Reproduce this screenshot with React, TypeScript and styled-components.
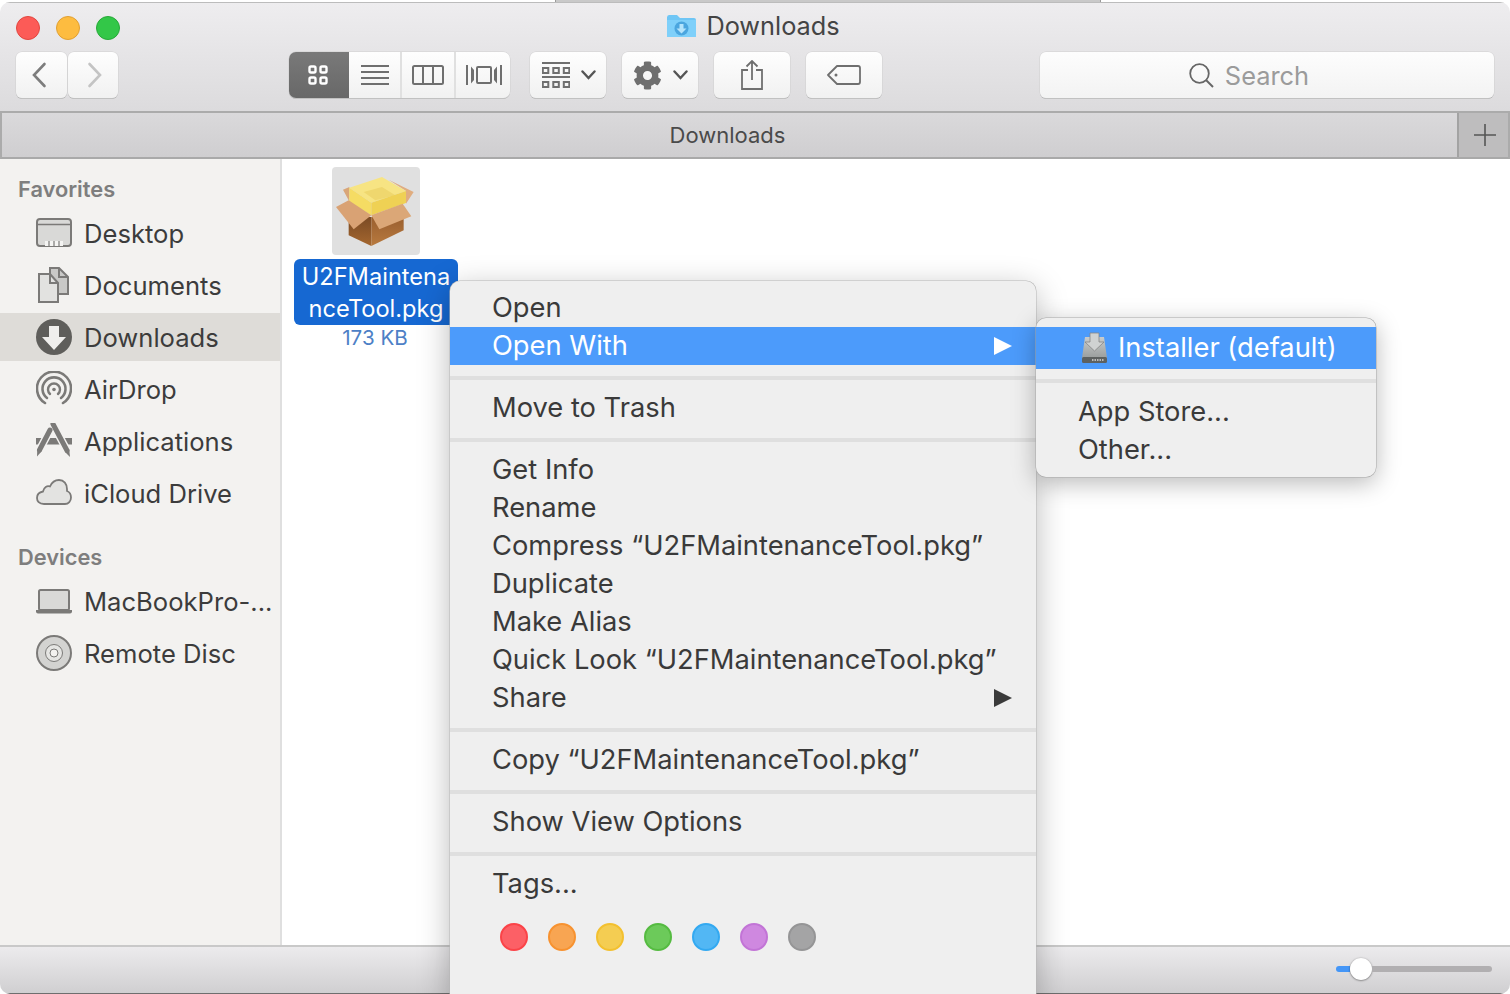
import React from 'react';
import styled, { createGlobalStyle } from 'styled-components';
import { FaCog } from 'react-icons/fa';

const GlobalStyle = createGlobalStyle`
  html, body {
    margin: 0;
    padding: 0;
    background: #fff;
    overflow: hidden;
  }
  * {
    box-sizing: border-box;
  }
`;

const Page = styled.div`
  position: relative;
  width: 1510px;
  height: 994px;
  overflow: hidden;
  display: flex;
  flex-direction: column;
  font-family: Inter, "Liberation Sans", sans-serif;
  color: #3a3a3a;
`;

const BackWindowEdge = styled.div`
  height: 2px;
  flex: none;
  margin: 0 409px 0 555px;
  background: #c9c9c9;
  border-left: 1px solid #9a9a9a;
  border-right: 1px solid #9a9a9a;
`;

const Window = styled.div`
  flex: 1;
  min-height: 0;
  display: flex;
  flex-direction: column;
  border-radius: 10px;
  overflow: hidden;
`;

const TitleBar = styled.div`
  height: 111px;
  flex: none;
  background: linear-gradient(#eeedef, #dcdbdd);
  border-top: 1px solid #bcbcbc;
  border-bottom: 2px solid #ababab;
`;

const TitleRow = styled.div`
  height: 49px;
  display: grid;
  grid-template-columns: 1fr auto 1fr;
  align-items: center;
`;

const Lights = styled.div`
  display: flex;
  gap: 16px;
  padding-left: 16px;
  margin-top: 1px;
`;

const Light = styled.span<{ $fill: string; $edge: string }>`
  width: 24px;
  height: 24px;
  border-radius: 50%;
  background: ${p => p.$fill};
  border: 1px solid ${p => p.$edge};
`;

const WindowTitle = styled.div`
  display: flex;
  align-items: center;
  gap: 9px;
  font-size: 25.3px;
  line-height: 32px;
  color: #444;
  padding-right: 4px;
  margin-top: -3px;
`;

const Toolbar = styled.div`
  display: flex;
  align-items: flex-start;
  padding: 0 16px;
  height: 46px;
`;

const ToolGroup = styled.div<{ $left?: number; $gap?: number }>`
  display: flex;
  gap: ${p => p.$gap ?? 0}px;
  margin-left: ${p => p.$left ?? 0}px;
`;

const ToolButton = styled.div<{ $width: number; $shift?: number }>`
  width: ${p => p.$width}px;
  height: 46px;
  display: flex;
  align-items: center;
  justify-content: center;
  gap: 11px;
  padding-left: ${p => Math.max(p.$shift ?? 0, 0)}px;
  padding-right: ${p => Math.max(-(p.$shift ?? 0), 0)}px;
  background: linear-gradient(#fefefe, #f1f1f1);
  border-radius: 6px;
  box-shadow: 0 0 0 0.5px #cfcfcf, 0 1px 0 #b2b2b2;
  color: #6f6f6f;
`;

const SegmentGroup = styled.div`
  display: flex;
  margin-left: 171px;
  border-radius: 7px;
  overflow: hidden;
  box-shadow: 0 0 0 0.5px #cfcfcf, 0 1px 0 #b2b2b2;
`;

const Segment = styled.div<{ $width: number; $active?: boolean }>`
  width: ${p => p.$width}px;
  height: 46px;
  display: flex;
  align-items: center;
  justify-content: center;
  background: ${p => (p.$active ? 'linear-gradient(#797979, #686868)' : 'linear-gradient(#fefefe, #f1f1f1)')};
  border-right: ${p => (p.$active ? 'none' : '2px solid #e0e0e0')};
  color: ${p => (p.$active ? '#fff' : '#6f6f6f')};
  padding-right: ${p => (p.$active ? 2 : 0)}px;
  &:last-child {
    border-right: none;
    padding-left: 2px;
  }
`;

const SearchField = styled.div`
  margin-left: auto;
  width: 454px;
  height: 46px;
  display: flex;
  align-items: center;
  justify-content: center;
  gap: 11px;
  padding-right: 36px;
  background: linear-gradient(#fdfdfd, #f3f3f3);
  border-radius: 6px;
  box-shadow: 0 0 0 0.5px #cfcfcf, 0 1px 0 #b2b2b2;
  font-size: 25.4px;
  color: #9b9b9b;
`;

const TabBar = styled.div`
  height: 46px;
  flex: none;
  display: flex;
  background: linear-gradient(#dad9db, #cfced0);
  border-left: 2px solid #ababab;
  border-right: 2px solid #ababab;
  border-bottom: 2px solid #a9a9a9;
`;

const TabTitle = styled.div`
  flex: 1;
  display: flex;
  align-items: center;
  justify-content: center;
  padding-right: 4px;
  font-size: 22px;
  color: #4a4a4a;
`;

const NewTab = styled.div`
  width: 51px;
  display: flex;
  align-items: center;
  justify-content: center;
  padding-left: 2px;
  background: #bebdbe;
  border-left: 2px solid #a3a3a3;
  color: #555;
`;

const Body = styled.div`
  flex: 1;
  min-height: 0;
  display: flex;
`;

const Sidebar = styled.aside`
  width: 282px;
  flex: none;
  background: #f3f2f0;
  border-right: 2px solid #dfdfdf;
  padding-top: 15px;
`;

const SidebarHeading = styled.div<{ $top?: number }>`
  height: 30px;
  line-height: 30px;
  margin-top: ${p => p.$top ?? 0}px;
  margin-bottom: 5px;
  padding-left: 18px;
  font-size: 21.8px;
  font-weight: 600;
  color: #7e7e7e;
`;

const SidebarRow = styled.div<{ $selected?: boolean }>`
  height: 48px;
  margin-bottom: 4px;
  display: flex;
  align-items: center;
  gap: 12px;
  padding-left: 36px;
  font-size: 25.6px;
  color: #3c3c3c;
  white-space: nowrap;
  background: ${p => (p.$selected ? '#dedcd8' : 'transparent')};
`;

const Content = styled.main`
  flex: 1;
  background: #fff;
  padding: 8px 0 0 12px;
`;

const FileItem = styled.div`
  width: 164px;
  display: flex;
  flex-direction: column;
  align-items: center;
`;

const FileTile = styled.div`
  width: 88px;
  height: 88px;
  border-radius: 4px;
  background: #e0e0e0;
`;

const FileName = styled.div`
  width: 164px;
  height: 66px;
  margin-top: 4px;
  padding: 2px 0 0;
  border-radius: 6px;
  background: #1668d2;
  color: #fff;
  font-size: 23.6px;
  line-height: 32px;
  text-align: center;
`;

const FileSize = styled.div`
  height: 26px;
  line-height: 26px;
  padding-right: 2px;
  font-size: 20.6px;
  color: #4d80c6;
`;

const Footer = styled.footer`
  height: 49px;
  flex: none;
  display: flex;
  align-items: center;
  justify-content: flex-end;
  padding: 0 18px 3px 0;
  background: linear-gradient(#ecebed, #d0cfd1);
  border-top: 2px solid #c9c9c9;
  border-bottom: 1px solid #6e6e6e;
`;

const Slider = styled.div`
  width: 156px;
  display: flex;
  align-items: center;
`;

const SliderFill = styled.span`
  width: 14px;
  height: 6px;
  border-radius: 3px 0 0 3px;
  background: #4496f7;
`;

const SliderThumb = styled.span`
  width: 22px;
  height: 22px;
  flex: none;
  border-radius: 50%;
  background: #fff;
  box-shadow: 0 0.5px 2px rgba(0, 0, 0, 0.55);
`;

const SliderRest = styled.span`
  flex: 1;
  height: 6px;
  border-radius: 0 3px 3px 0;
  background: #b1afb1;
`;

const Menu = styled.div`
  position: absolute;
  left: 450px;
  top: 281px;
  width: 586px;
  padding: 8px 0 50px;
  background: #efefef;
  border-radius: 10px 10px 0 0;
  box-shadow: 0 0 0 0.5px #b5b5b5, 0 8px 32px rgba(0, 0, 0, 0.28);
  font-size: 27.3px;
  color: #3a3a3a;
`;

const SubMenu = styled(Menu)`
  left: 1036px;
  top: 318px;
  width: 340px;
  height: 159px;
  padding: 9px 0 0;
  border-radius: 10px;
  box-shadow: 0 0 0 0.5px #a8a8a8, 0 6px 24px rgba(0, 0, 0, 0.28);
`;

const MenuRow = styled.div<{ $active?: boolean; $inset?: number }>`
  height: 38px;
  display: flex;
  align-items: center;
  justify-content: space-between;
  padding: 0 24px 1px ${p => p.$inset ?? 42}px;
  white-space: nowrap;
  background: ${p => (p.$active ? '#4c9bfb' : 'transparent')};
  color: ${p => (p.$active ? '#fff' : 'inherit')};
`;

const InstallerRow = styled(MenuRow)`
  height: 42px;
  justify-content: flex-start;
  gap: 10px;
`;

const MenuSeparator = styled.div`
  height: 4px;
  margin: 11px 0 9px;
  background: #dfdfdf;
`;

const SubSeparator = styled(MenuSeparator)`
  margin: 10px 0 10px;
`;

const Arrow = styled.span<{ $color: string }>`
  width: 0;
  height: 0;
  margin-top: 1px;
  border-left: 18px solid ${p => p.$color};
  border-top: 9.5px solid transparent;
  border-bottom: 9.5px solid transparent;
`;

const TagRow = styled.div`
  display: flex;
  gap: 20px;
  padding-left: 50px;
  margin-top: 20px;
`;

const TagDot = styled.span<{ $fill: string; $edge: string }>`
  width: 28px;
  height: 28px;
  border-radius: 50%;
  background: ${p => p.$fill};
  border: 2px solid ${p => p.$edge};
`;

const Stroke = { fill: 'none', stroke: 'currentColor', strokeWidth: 2 };

const FolderIcon = () => (
  <svg width="31" height="24" viewBox="0 0 31 24">
    <path d="M1 3.500Q1 1 3 1h8l3 3h14q2 0 2 2v16q0 1-1 1H2q-1 0-1-1z" fill="#6fc6f5" />
    <path d="M1 6h29v16q0 1-1 1H2q-1 0-1-1z" fill="#7fd0fa" />
    <circle cx="15.500" cy="14.500" r="7" fill="#4ba6df" />
    <path d="M13.500 10h4v4.500h3l-5 5-5-5h3z" fill="#b4e4fc" />
  </svg>
);

const ChevronBack = ({ color }: { color: string }) => (
  <svg width="16" height="26" viewBox="0 0 16 26">
    <path d="M13.500 2 3 13l10.500 11" fill="none" stroke={color} strokeWidth="2.600" strokeLinecap="round" />
  </svg>
);

const ChevronForward = ({ color }: { color: string }) => (
  <svg width="16" height="26" viewBox="0 0 16 26">
    <path d="M2.500 2 13 13 2.500 24" fill="none" stroke={color} strokeWidth="2.600" strokeLinecap="round" />
  </svg>
);

const IconsViewIcon = () => (
  <svg width="20" height="20" viewBox="0 0 20 20">
    {[1.5, 12.5].map(y =>
      [1.5, 12.5].map(x => (
        <rect key={`${x}-${y}`} x={x} y={y} width="6" height="6" rx="1.500" fill="none" stroke="currentColor" strokeWidth="2.400" />
      )),
    )}
  </svg>
);

const ListViewIcon = () => (
  <svg width="28" height="20" viewBox="0 0 28 20">
    {[1, 7, 13, 19].map(y => (
      <rect key={y} x="0" y={y - 1} width="28" height="2" fill="currentColor" />
    ))}
  </svg>
);

const ColumnViewIcon = () => (
  <svg width="32" height="20" viewBox="0 0 32 20">
    <rect x="1" y="1" width="30" height="18" rx="1.500" {...Stroke} />
    <path d="M11 1v18M21 1v18" {...Stroke} />
  </svg>
);

const CoverFlowIcon = () => (
  <svg width="36" height="22" viewBox="0 0 36 22">
    <rect x="11" y="3" width="14" height="16" rx="1" {...Stroke} />
    <path d="M1 1v20M35 1v20" {...Stroke} />
    <path d="M5 2.500v17l3-3.500v-10zM31 2.500v17l-3-3.500v-10z" fill="currentColor" />
  </svg>
);

const GroupIcon = () => (
  <svg width="28" height="26" viewBox="0 0 28 26">
    <path d="M0 1h28M0 15h28" {...Stroke} />
    {[0, 10.5, 21].map(x => (
      <g key={x}>
        <rect x={x + 0.8} y="6" width="5.500" height="5" {...Stroke} />
        <rect x={x + 0.8} y="20" width="5.500" height="5" {...Stroke} />
      </g>
    ))}
  </svg>
);

const SmallChevron = () => (
  <svg width="15" height="10" viewBox="0 0 15 10">
    <path d="M1.500 1.500 7.500 8l6-6.500" fill="none" stroke="#555" strokeWidth="2.400" strokeLinecap="round" />
  </svg>
);

const ShareIcon = () => (
  <svg width="22" height="30" viewBox="0 0 22 30">
    <path d="M7 10H1v19h20V10h-6" {...Stroke} strokeWidth="1.800" />
    <path d="M11 20V1.500M5.500 6.500 11 1l5.500 5.500" {...Stroke} strokeWidth="1.800" />
  </svg>
);

const TagIcon = () => (
  <svg width="34" height="20" viewBox="0 0 34 20">
    <path d="M10 1h21q2 0 2 2v14q0 2-2 2H10L1 10z" {...Stroke} strokeWidth="1.800" strokeLinejoin="round" />
    <circle cx="9" cy="10" r="1.500" fill="currentColor" />
  </svg>
);

const SearchIcon = () => (
  <svg width="25" height="25" viewBox="0 0 25 25">
    <circle cx="10.500" cy="10.500" r="9.300" fill="none" stroke="#666" strokeWidth="1.800" />
    <path d="m17 17 7 7" stroke="#666" strokeWidth="2" />
  </svg>
);

const PlusIcon = () => (
  <svg width="22" height="22" viewBox="0 0 22 22">
    <path d="M11 0v22M0 11h22" stroke="currentColor" strokeWidth="1.600" />
  </svg>
);

const SideIcon = ({ children }: { children: React.ReactNode }) => (
  <svg width="36" height="36" viewBox="0 0 36 36" style={{ flex: 'none' }}>
    {children}
  </svg>
);

const sideGrey = '#7b7a78';

const DesktopIcon = () => (
  <SideIcon>
    <rect x="1" y="4" width="34" height="27" rx="3" fill="#d9d9d7" stroke={sideGrey} strokeWidth="2" />
    <path d="M1 9.500h34" stroke={sideGrey} strokeWidth="1.600" />
    <rect x="9" y="26" width="18" height="5" fill="#f4f4f2" />
    <path d="M13 26v5M18 26v5M23 26v5" stroke={sideGrey} strokeWidth="1.200" />
  </SideIcon>
);

const DocumentsIcon = () => (
  <SideIcon>
    <path d="M14 1h9l9 9v17H14z" fill="#c9c9c7" stroke={sideGrey} strokeWidth="2" />
    <path d="M23 1v9h9" fill="none" stroke={sideGrey} strokeWidth="2" />
    <path d="M3 7h11l8 9v19H3z" fill="#e2e2e0" stroke={sideGrey} strokeWidth="2" />
    <path d="M14 7v9h8" fill="none" stroke={sideGrey} strokeWidth="2" />
  </SideIcon>
);

const DownloadsIcon = () => (
  <SideIcon>
    <circle cx="18" cy="18" r="18" fill="#5f5e5b" />
    <path d="M13 7h10v11h7L18 31 6 18h7z" fill="#efeeec" />
  </SideIcon>
);

const AirDropIcon = () => (
  <SideIcon>
    <g fill="none" stroke={sideGrey} strokeLinecap="round">
      <path d="M9 32A17 17 0 1 1 27 32" strokeWidth="2.600" />
      <path d="M11 27A11.500 11.500 0 1 1 25 27" strokeWidth="2.600" />
      <path d="M14 23a6 6 0 1 1 8 0" strokeWidth="2.400" />
    </g>
    <circle cx="18" cy="18.500" r="1.800" fill={sideGrey} />
  </SideIcon>
);

const ApplicationsIcon = () => (
  <SideIcon>
    <rect x="0" y="15" width="36" height="6.500" fill={sideGrey} />
    <path d="M14 7 3.500 27M17 1l14 26.500" stroke="#f3f2f0" strokeWidth="8" />
    <path d="M14 7 3.500 27M17 1l14 26.500" stroke={sideGrey} strokeWidth="5" strokeLinecap="round" />
    <polygon points="1.300,25.900 5.700,28.200 1,33.500" fill={sideGrey} />
    <polygon points="33.200,26.300 28.800,28.700 34,34" fill={sideGrey} />
  </SideIcon>
);

const CloudIcon = () => (
  <SideIcon>
    <path
      d="M8 29C3 29 1 26 1 23c0-4 3-6 6-6.500 1-4.500 4-6 7-5 2-4.500 5-6.500 9-6.500 5 0 8 4 8 9v2c2.500 1 4 3.500 4 6.500 0 3.500-2.500 6.500-6 6.500z"
      fill="#e3e3e1"
      stroke={sideGrey}
      strokeWidth="1.800"
    />
  </SideIcon>
);

const LaptopIcon = () => (
  <SideIcon>
    <rect x="3" y="7" width="30" height="20" rx="1.500" fill="#d9d9d7" stroke={sideGrey} strokeWidth="2" />
    <path d="M0 27h36v1.500q0 2-2 2H2q-2 0-2-2z" fill={sideGrey} />
  </SideIcon>
);

const DiscIcon = () => (
  <SideIcon>
    <circle cx="18" cy="18" r="17" fill="#d3d3d1" stroke={sideGrey} strokeWidth="2" />
    <circle cx="18" cy="18" r="8.500" fill="#e5e5e3" stroke={sideGrey} strokeWidth="1" />
    <circle cx="18" cy="18" r="4" fill="#f3f2f0" stroke={sideGrey} strokeWidth="1" />
  </SideIcon>
);

const PackageIcon = () => (
  <svg width="88" height="88" viewBox="0 0 264 264">
    <defs>
      <linearGradient id="boxLeft" x1="0" y1="0" x2="0" y2="1">
        <stop offset="0" stopColor="#7a4a24" />
        <stop offset="1" stopColor="#a5672f" />
      </linearGradient>
      <linearGradient id="boxRight" x1="0" y1="0" x2="0" y2="1">
        <stop offset="0" stopColor="#93592b" />
        <stop offset="1" stopColor="#b87a3f" />
      </linearGradient>
    </defs>
    <polygon points="33,68 52,60 52,105 50,100" fill="#d9a679" />
    <polygon points="170,38 245,75 222,110 222,72" fill="#e0ad80" />
    <polygon points="50,150 118,150 118,237 50,205" fill="url(#boxLeft)" />
    <polygon points="118,150 215,130 215,190 118,237" fill="url(#boxRight)" />
    <polygon points="52,62 150,30 222,72 118,107" fill="#f7e483" />
    <polygon points="95,75 150,60 190,85 130,100" fill="#efd76e" />
    <polygon points="52,62 118,107 118,145 52,105" fill="#f5dc63" />
    <polygon points="118,107 222,72 222,108 118,145" fill="#efd154" />
    <polygon points="12,120 50,100 118,145 65,187" fill="#d9a274" />
    <polygon points="118,145 212,110 238,148 142,187" fill="#dba777" />
  </svg>
);

const InstallerIcon = () => (
  <svg width="27" height="32" viewBox="0 0 27 32">
    <defs>
      <linearGradient id="installerDisk" x1="0" y1="0" x2="0" y2="1">
        <stop offset="0" stopColor="#c9cccc" />
        <stop offset="1" stopColor="#9a9e9d" />
      </linearGradient>
    </defs>
    <path d="M4 5h19l3 21H1z" fill="url(#installerDisk)" />
    <rect x="1" y="25" width="25" height="6" rx="1.500" fill="#5d6160" />
    <path d="M9 1h9v9h5l-9.500 9L4 10h5z" fill="#d0d2d2" stroke="#858585" strokeWidth="0.800" />
    <path d="M11 28h12" stroke="#d8d8d8" strokeWidth="1.600" strokeDasharray="1.500 1" />
  </svg>
);

const favorites = [
  { label: 'Desktop', icon: <DesktopIcon /> },
  { label: 'Documents', icon: <DocumentsIcon /> },
  { label: 'Downloads', icon: <DownloadsIcon />, selected: true },
  { label: 'AirDrop', icon: <AirDropIcon /> },
  { label: 'Applications', icon: <ApplicationsIcon /> },
  { label: 'iCloud Drive', icon: <CloudIcon /> },
];

const devices = [
  { label: 'MacBookPro-...', icon: <LaptopIcon /> },
  { label: 'Remote Disc', icon: <DiscIcon /> },
];

const infoItems = [
  'Get Info',
  'Rename',
  'Compress “U2FMaintenanceTool.pkg”',
  'Duplicate',
  'Make Alias',
  'Quick Look “U2FMaintenanceTool.pkg”',
];

const tagColors = [
  { fill: '#fc6066', edge: '#fb4348' },
  { fill: '#f8a552', edge: '#f79230' },
  { fill: '#f4cd52', edge: '#f3c02f' },
  { fill: '#6cca5a', edge: '#55bb41' },
  { fill: '#52b7f4', edge: '#33a9f1' },
  { fill: '#cf88e0', edge: '#c274d6' },
  { fill: '#a4a4a5', edge: '#959596' },
];

export default function App() {
  return (
    <Page>
      <GlobalStyle />
      <BackWindowEdge />
      <Window>
        <TitleBar>
          <TitleRow>
            <Lights>
              <Light $fill="#fc5b57" $edge="#e2463f" />
              <Light $fill="#fdbc40" $edge="#e1a032" />
              <Light $fill="#33c748" $edge="#27a938" />
            </Lights>
            <WindowTitle>
              <FolderIcon />
              Downloads
            </WindowTitle>
            <span />
          </TitleRow>
          <Toolbar>
            <ToolGroup $gap={1}>
              <ToolButton $width={51} $shift={-6}>
                <ChevronBack color="#7d7d7d" />
              </ToolButton>
              <ToolButton $width={50} $shift={3}>
                <ChevronForward color="#c4c4c4" />
              </ToolButton>
            </ToolGroup>
            <SegmentGroup>
              <Segment $width={60} $active>
                <IconsViewIcon />
              </Segment>
              <Segment $width={53}>
                <ListViewIcon />
              </Segment>
              <Segment $width={54}>
                <ColumnViewIcon />
              </Segment>
              <Segment $width={54}>
                <CoverFlowIcon />
              </Segment>
            </SegmentGroup>
            <ToolGroup $left={20} $gap={16}>
              <ToolButton $width={76} $shift={1}>
                <GroupIcon />
                <SmallChevron />
              </ToolButton>
              <ToolButton $width={76}>
                <FaCog size={29} />
                <SmallChevron />
              </ToolButton>
              <ToolButton $width={76}>
                <ShareIcon />
              </ToolButton>
              <ToolButton $width={76}>
                <TagIcon />
              </ToolButton>
            </ToolGroup>
            <SearchField>
              <SearchIcon />
              Search
            </SearchField>
          </Toolbar>
        </TitleBar>
        <TabBar>
          <TabTitle>Downloads</TabTitle>
          <NewTab>
            <PlusIcon />
          </NewTab>
        </TabBar>
        <Body>
          <Sidebar>
            <SidebarHeading>Favorites</SidebarHeading>
            {favorites.map(item => (
              <SidebarRow key={item.label} $selected={item.selected}>
                {item.icon}
                {item.label}
              </SidebarRow>
            ))}
            <SidebarHeading $top={25}>Devices</SidebarHeading>
            {devices.map(item => (
              <SidebarRow key={item.label}>
                {item.icon}
                {item.label}
              </SidebarRow>
            ))}
          </Sidebar>
          <Content>
            <FileItem>
              <FileTile>
                <PackageIcon />
              </FileTile>
              <FileName>
                U2FMaintena
                <br />
                nceTool.pkg
              </FileName>
              <FileSize>173 KB</FileSize>
            </FileItem>
          </Content>
        </Body>
        <Footer>
          <Slider>
            <SliderFill />
            <SliderThumb />
            <SliderRest />
          </Slider>
        </Footer>
      </Window>

      <Menu>
        <MenuRow>Open</MenuRow>
        <MenuRow $active>
          Open With
          <Arrow $color="#fff" />
        </MenuRow>
        <MenuSeparator />
        <MenuRow>Move to Trash</MenuRow>
        <MenuSeparator />
        {infoItems.map(item => (
          <MenuRow key={item}>{item}</MenuRow>
        ))}
        <MenuRow>
          Share
          <Arrow $color="#3a3a3a" />
        </MenuRow>
        <MenuSeparator />
        <MenuRow>Copy “U2FMaintenanceTool.pkg”</MenuRow>
        <MenuSeparator />
        <MenuRow>Show View Options</MenuRow>
        <MenuSeparator />
        <MenuRow>Tags...</MenuRow>
        <TagRow>
          {tagColors.map(tag => (
            <TagDot key={tag.fill} $fill={tag.fill} $edge={tag.edge} />
          ))}
        </TagRow>
      </Menu>

      <SubMenu>
        <InstallerRow $active $inset={45}>
          <InstallerIcon />
          Installer (default)
        </InstallerRow>
        <SubSeparator />
        <MenuRow>App Store...</MenuRow>
        <MenuRow>Other...</MenuRow>
      </SubMenu>
    </Page>
  );
}
